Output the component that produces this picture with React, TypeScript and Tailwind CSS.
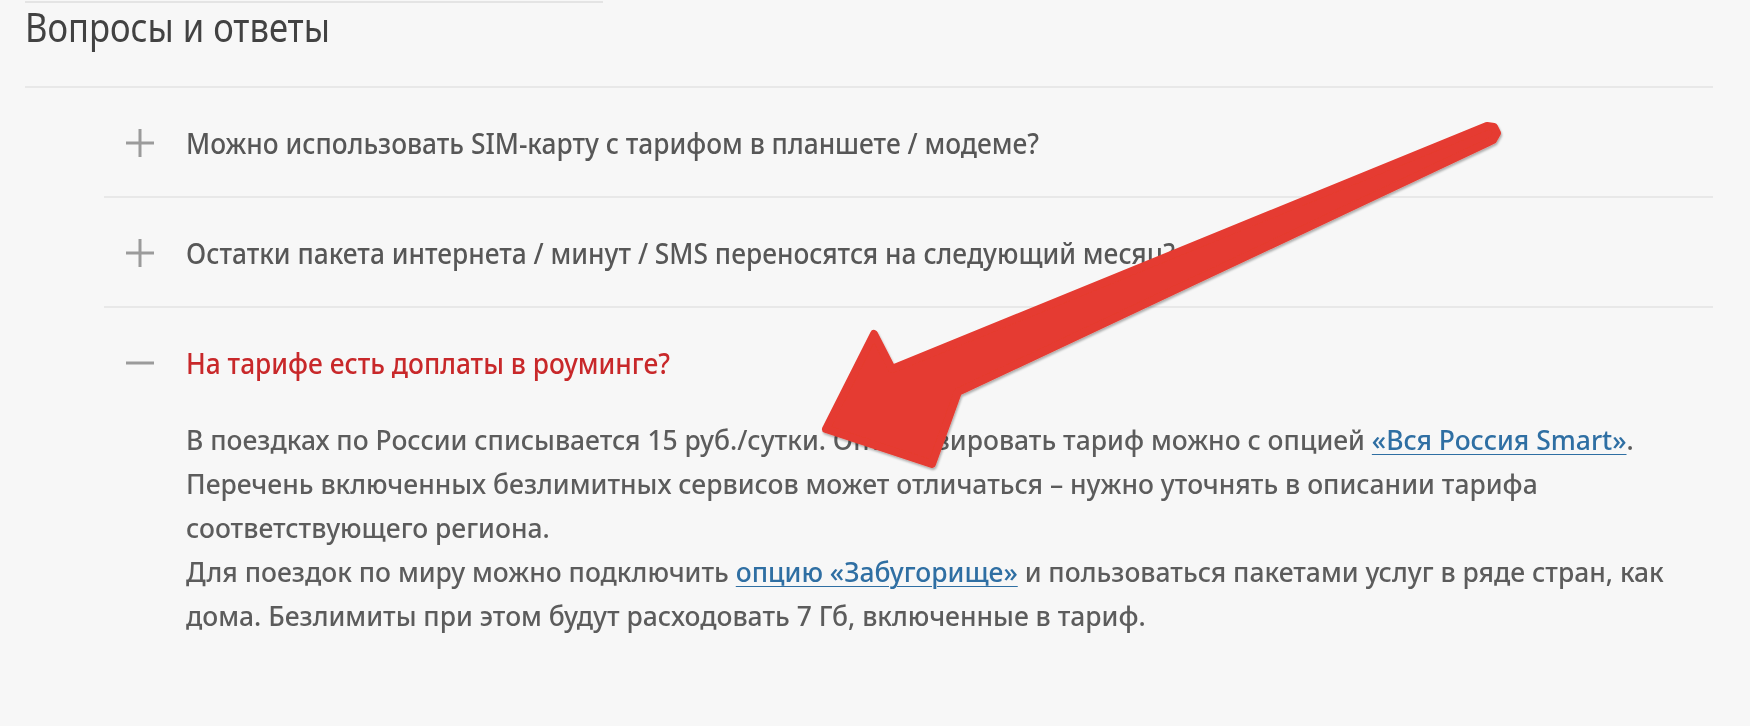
import React from "react";

function PlusIcon() {
  return (
    <svg width="28" height="28" viewBox="0 0 28 28" className="shrink-0">
      <rect x="0" y="12.5" width="28" height="3" fill="#9b9b9b" />
      <rect x="12.5" y="0" width="3" height="28" fill="#9b9b9b" />
    </svg>
  );
}

function MinusIcon() {
  return (
    <svg width="28" height="28" viewBox="0 0 28 28" className="shrink-0">
      <rect x="0" y="12.5" width="28" height="3" fill="#9b9b9b" />
    </svg>
  );
}

function Arrow() {
  const pts = [
    [826, 429],
    [874, 334],
    [892, 369],
    [1487, 126],
    [1494, 127],
    [1497, 133],
    [1493, 140],
    [1487, 143],
    [958, 392],
    [932, 464],
  ]
    .map((p) => p.join(","))
    .join(" ");
  return (
    <svg
      className="pointer-events-none absolute left-0 top-0"
      width="1750"
      height="726"
      viewBox="0 0 1750 726"
    >
      <defs>
        <filter id="sh" x="-10%" y="-10%" width="120%" height="120%">
          <feDropShadow dx="1" dy="2" stdDeviation="1.2" floodColor="#000" floodOpacity="0.3" />
        </filter>
      </defs>
      <polygon
        points={pts}
        fill="#e53b30"
        stroke="#e53b30"
        strokeWidth="8"
        strokeLinejoin="round"
        filter="url(#sh)"
      />
    </svg>
  );
}

function Row({ children }: { children: React.ReactNode }) {
  return (
    <div className="border-b-2 border-[#e8e8e8] pb-[33px] pt-[35px]">
      <div className="flex items-center pl-[22px]">
        <PlusIcon />
        <div className="ml-[32px] origin-left scale-x-[0.908] whitespace-nowrap text-[29px] font-medium leading-[40px] text-[#575757]">
          {children}
        </div>
      </div>
    </div>
  );
}

export default function App() {
  return (
    <div className="relative min-h-[726px] w-[1750px] overflow-hidden bg-[#f7f7f7] font-['Noto_Sans',sans-serif]">
      <div className="ml-[25px] mt-px h-[2px] w-[578px] bg-[#e4e4e4]" />
      <h2 className="ml-[25px] origin-left scale-x-[0.864] text-[40px] font-normal leading-[48px] text-[#424242]">
        Вопросы и ответы
      </h2>
      <div className="ml-[25px] mt-[35px] w-[1688px] border-t-2 border-[#e8e8e8]">
        <div className="ml-[79px]">
          <Row>Можно использовать SIM-карту с тарифом в планшете / модеме?</Row>
          <Row>Остатки пакета интернета / минут / SMS переносятся на следующий месяц?</Row>
          <div className="pt-[35px]">
            <div className="flex items-center pl-[22px]">
              <MinusIcon />
              <div className="ml-[32px] origin-left scale-x-[0.908] whitespace-nowrap text-[29px] font-medium leading-[40px] text-[#c8282a]">
                На тарифе есть доплаты в роуминге?
              </div>
            </div>
            <p className="ml-[82px] mt-[35px] origin-left scale-x-[0.98] whitespace-nowrap text-[27px] font-medium leading-[44px] text-[#5c5c5c]">
              В поездках по России списывается 15 руб./сутки. Оптимизировать тариф можно с опцией{" "}
              <a className="text-[#2f6fa3] underline underline-offset-4 decoration-1" href="#">
                «Вся Россия Smart»
              </a>
              .
              <br />
              Перечень включенных безлимитных сервисов может отличаться – нужно уточнять в описании тарифа
              <br />
              соответствующего региона.
              <br />
              Для поездок по миру можно подключить{" "}
              <a className="text-[#2f6fa3] underline underline-offset-4 decoration-1" href="#">
                опцию «Забугорище»
              </a>{" "}
              и пользоваться пакетами услуг в ряде стран, как
              <br />
              дома. Безлимиты при этом будут расходовать 7 Гб, включенные в тариф.
            </p>
          </div>
        </div>
      </div>
      <Arrow />
    </div>
  );
}
